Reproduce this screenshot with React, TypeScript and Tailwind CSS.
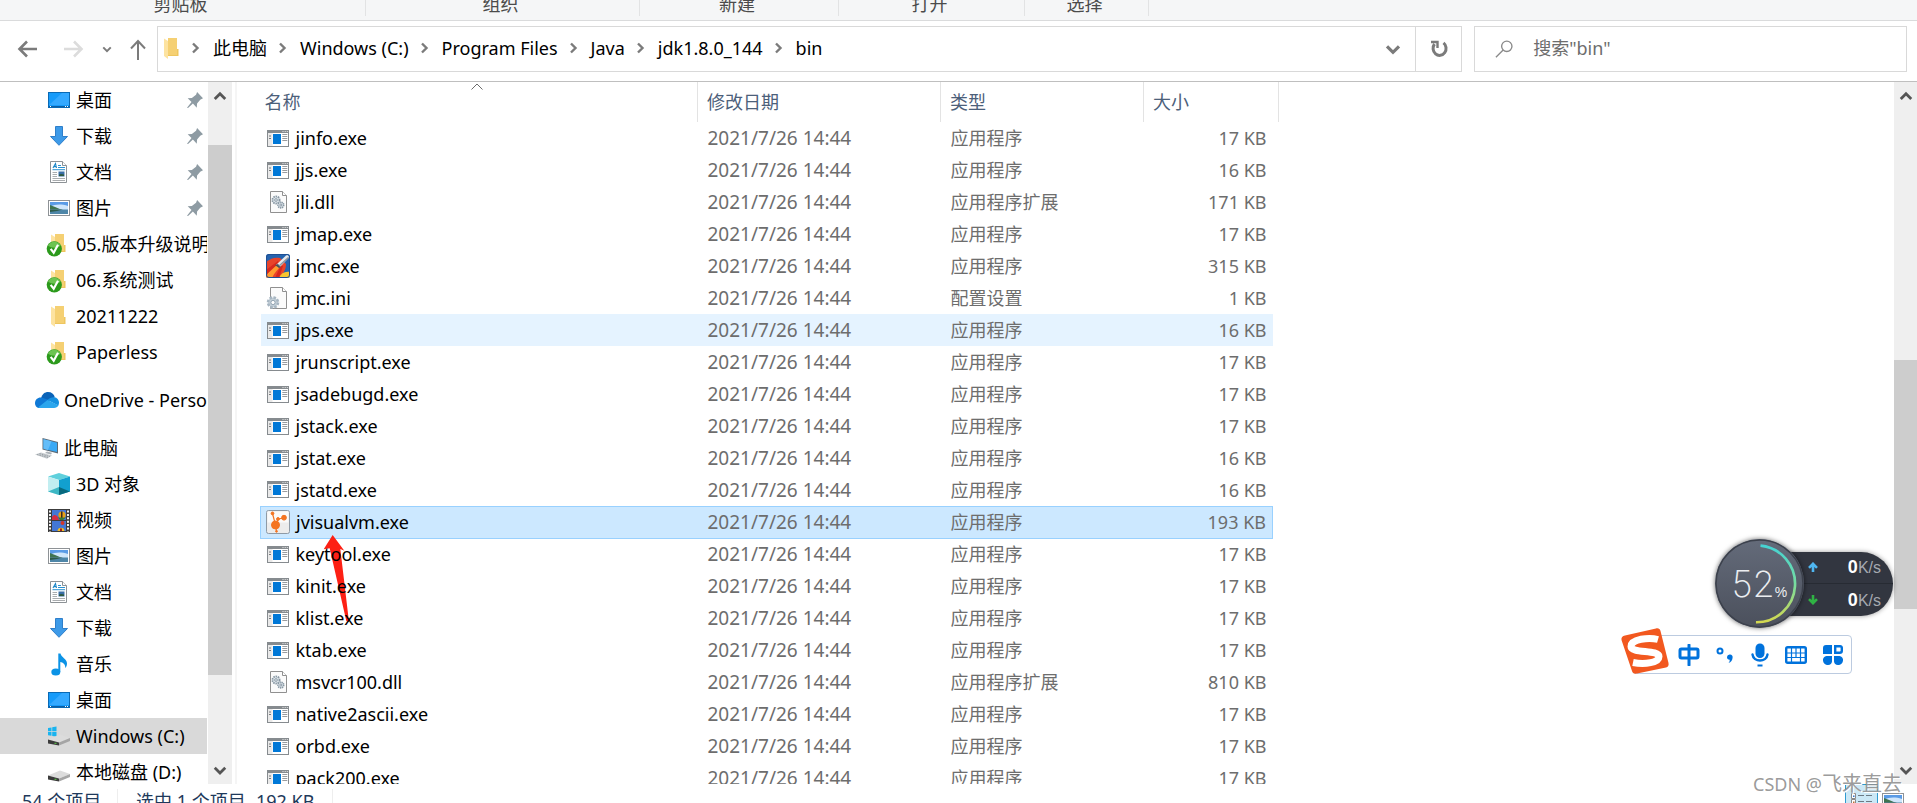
import type { ReactNode } from 'react'

type FileKind = 'exe' | 'dll' | 'ini' | 'jmc' | 'visualvm'

interface FileRow {
  name: string
  kind: FileKind
  type: string
  size: string
}

const MODIFIED = '2021/7/26 14:44'
const APP = '应用程序'
const APP_EXT = '应用程序扩展'

const files: FileRow[] = [
  { name: 'jinfo.exe', kind: 'exe', type: APP, size: '17 KB' },
  { name: 'jjs.exe', kind: 'exe', type: APP, size: '16 KB' },
  { name: 'jli.dll', kind: 'dll', type: APP_EXT, size: '171 KB' },
  { name: 'jmap.exe', kind: 'exe', type: APP, size: '17 KB' },
  { name: 'jmc.exe', kind: 'jmc', type: APP, size: '315 KB' },
  { name: 'jmc.ini', kind: 'ini', type: '配置设置', size: '1 KB' },
  { name: 'jps.exe', kind: 'exe', type: APP, size: '16 KB' },
  { name: 'jrunscript.exe', kind: 'exe', type: APP, size: '17 KB' },
  { name: 'jsadebugd.exe', kind: 'exe', type: APP, size: '17 KB' },
  { name: 'jstack.exe', kind: 'exe', type: APP, size: '17 KB' },
  { name: 'jstat.exe', kind: 'exe', type: APP, size: '16 KB' },
  { name: 'jstatd.exe', kind: 'exe', type: APP, size: '16 KB' },
  { name: 'jvisualvm.exe', kind: 'visualvm', type: APP, size: '193 KB' },
  { name: 'keytool.exe', kind: 'exe', type: APP, size: '17 KB' },
  { name: 'kinit.exe', kind: 'exe', type: APP, size: '17 KB' },
  { name: 'klist.exe', kind: 'exe', type: APP, size: '17 KB' },
  { name: 'ktab.exe', kind: 'exe', type: APP, size: '17 KB' },
  { name: 'msvcr100.dll', kind: 'dll', type: APP_EXT, size: '810 KB' },
  { name: 'native2ascii.exe', kind: 'exe', type: APP, size: '17 KB' },
  { name: 'orbd.exe', kind: 'exe', type: APP, size: '17 KB' },
  { name: 'pack200.exe', kind: 'exe', type: APP, size: '17 KB' },
]

const hoveredFile = 'jps.exe'
const selectedFile = 'jvisualvm.exe'

/* ---------- icons ---------- */

function Chevron({ dir, className }: { dir: 'up' | 'down' | 'right'; className?: string }) {
  const d = {
    up: 'M1.5 8.5 6 4l4.5 4.5',
    down: 'M1.5 4 6 8.5 10.5 4',
    right: 'M4 1.5 8.5 6 4 10.5',
  }[dir]
  return (
    <svg viewBox="0 0 12 12" className={className} fill="none" stroke="currentColor" strokeWidth="2.4" aria-hidden>
      <path d={d} />
    </svg>
  )
}

function ExeIcon() {
  return (
    <svg width="22" height="17" viewBox="0 0 22 17" aria-hidden>
      <rect x="0.5" y="0.5" width="21" height="16" fill="#fff" stroke="#868b8f" />
      <path d="M0 0h22v3H0z" fill="#868b8f" />
      <path d="M15.5 1h1v1h-1zM17.7 1h1v1h-1zM19.8 1h1v1h-1z" fill="#e8e8e8" />
      <path d="M1 3h4.5v13H1z" fill="#e9e9e9" />
      <path d="M2 6h2M2 8.5h2" stroke="#77797b" />
      <path d="M6 4h8v10H6z" fill="#0078d7" />
      <path d="M15.3 4.5h5M15.3 6.5h5M15.3 8.5h5M15.3 10.5h5" stroke="#8c9094" strokeWidth="0.9" />
    </svg>
  )
}

function Sheet({ children }: { children?: ReactNode }) {
  return (
    <>
      <path d="M3.5 0.5h12l4 4v17h-16z" fill="#fbfbfb" stroke="#909090" />
      <path d="M15.5 0.5v4h4" fill="#fff" stroke="#909090" />
      {children}
    </>
  )
}

function DllIcon() {
  return (
    <svg width="22" height="22" viewBox="0 0 22 22" aria-hidden>
      <Sheet>
        <circle cx="9" cy="9" r="3.6" fill="#dde4e9" stroke="#8797a3" strokeWidth="1.8" strokeDasharray="1.5 0.8" />
        <circle cx="9" cy="9" r="1.3" fill="#fff" stroke="#6f8190" strokeWidth="0.8" />
        <circle cx="13.8" cy="14" r="2.9" fill="#dde4e9" stroke="#8797a3" strokeWidth="1.6" strokeDasharray="1.3 0.7" />
        <circle cx="13.8" cy="14" r="1" fill="#fff" stroke="#6f8190" strokeWidth="0.8" />
      </Sheet>
    </svg>
  )
}

function IniIcon() {
  return (
    <svg width="24" height="23" viewBox="-1 0 24 23" aria-hidden>
      <Sheet>
        <circle cx="6" cy="15.5" r="5" fill="#c3cfd8" stroke="#a7b6c2" strokeWidth="2.6" strokeDasharray="2.5 1.4" />
        <circle cx="6" cy="15.5" r="2.1" fill="#fff" stroke="#8195a5" strokeWidth="0.8" />
      </Sheet>
    </svg>
  )
}

function JmcIcon() {
  return (
    <svg width="24" height="24" viewBox="0 0 24 24" aria-hidden>
      <defs>
        <clipPath id="jmc">
          <rect width="24" height="24" rx="2.5" />
        </clipPath>
      </defs>
      <g clipPath="url(#jmc)">
        <path d="M0 0h24v24H0z" fill="#2563ae" />
        <path d="M0 8C5 4 9 3 14 4l6 6c0 6-3 10-7 14H0z" fill="#e8432a" />
        <path d="M0 24C2 17 7 11 13 8l3 3C12 15 8 19 6 24z" fill="#ff9a2e" />
        <path d="M0 16 12 7l1 2L0 21zM9 24l6-13 2 1-4 12z" fill="#d7281d" />
        <path d="M13 24c2-5 6-7 11-6v6z" fill="#f5c52f" />
        <path d="M10 11 20 1.5c2-1.5 4 .5 2.5 2.5L14 13z" fill="#e7e9ec" />
        <path d="m9 11 3-1 3 3-2 1z" fill="#48505c" />
        <path d="m13 12 9.5-8.5" stroke="#8d949e" strokeWidth="1.5" />
      </g>
      <rect x="0.5" y="0.5" width="23" height="23" rx="2.5" fill="none" stroke="#1f4f93" />
    </svg>
  )
}

function VisualVmIcon() {
  return (
    <svg width="24" height="24" viewBox="0 0 24 24" aria-hidden>
      <rect x="0.5" y="0.5" width="23" height="23" rx="2" fill="#ececec" stroke="#8e9aa6" />
      <path d="M1.5 1.5h21v11h-21z" fill="#fafafa" />
      <g fill="#f47421" stroke="#f47421">
        <path d="M6.5 3.5 9.5 15l2.5-6 6-1M9.5 15l1 6" fill="none" strokeWidth="1.2" />
        <circle cx="6.5" cy="3.4" r="1.4" />
        <circle cx="9.5" cy="15" r="4" />
        <circle cx="12" cy="9" r="1.4" />
        <circle cx="18" cy="7.7" r="2.4" />
        <circle cx="10.5" cy="21.3" r="0.9" />
      </g>
    </svg>
  )
}

function FileIcon({ kind }: { kind: FileKind }) {
  switch (kind) {
    case 'dll':
      return <DllIcon />
    case 'ini':
      return <IniIcon />
    case 'jmc':
      return <JmcIcon />
    case 'visualvm':
      return <VisualVmIcon />
    default:
      return <ExeIcon />
  }
}

function FolderShape() {
  return (
    <>
      <path d="M4 0h9v11h1.500v7H4z" fill="#eec65f" />
      <path d="M4 0h9v17H4z" fill="#f5d073" />
      <path d="M0 0.500 4 3v18L0 18z" fill="#fde3a0" />
    </>
  )
}

function FolderIcon({ synced = false }: { synced?: boolean }) {
  return (
    <svg width="22" height="24" viewBox="-3 -2 22 24" className="overflow-visible" aria-hidden>
      <FolderShape />
      {synced && (
        <>
          <circle cx="3.3" cy="14.8" r="7.6" fill="#2c9a1c" />
          <path d="M-3 11.8a7 7 0 0 1 12.6 0c-3 2.500-9 2.500-12.6 0z" fill="#6cc452" />
          <path d="m-.3 14.800 3 4L7 10.800" fill="none" stroke="#fff" strokeWidth="2.2" />
        </>
      )}
    </svg>
  )
}

function DesktopIcon() {
  return (
    <svg width="22" height="16" viewBox="0 0 22 16" aria-hidden>
      <rect x="0.5" y="0.5" width="21" height="15" fill="#169bfa" stroke="#0a6ab5" />
      <path d="M1 13 14 1h7v12z" fill="#35a9ff" />
      <path d="M1 14h20v1H1z" fill="#0c5ea5" />
      <path d="M2 14h1v1H2zM17 14h1v1h-1zM19 14h1v1h-1z" fill="#fff" />
    </svg>
  )
}

function DownloadIcon() {
  return (
    <svg width="22" height="20" viewBox="0 0 22 20" aria-hidden>
      <path d="M7.5 0.5h7v10h5L11 19.3 2.5 10.5h5z" fill="#3d9ae8" stroke="#2f7fca" />
    </svg>
  )
}

function DocumentIcon() {
  return (
    <svg width="22" height="22" viewBox="0 0 22 22" aria-hidden>
      <path d="M2.5 0.5h12l4 4v17h-16z" fill="#fff" stroke="#8d9296" />
      <path d="M14.5 0.5v4h4" fill="#fff" stroke="#8d9296" />
      <path d="m5 7 2.5-4.5L8.5 7M6 5.6h2.5" fill="none" stroke="#1a86c8" strokeWidth="1.1" />
      <path d="M10 4.5h3M10 6.5h7M4.5 8.7h12.5" stroke="#2a92d2" />
      <path d="M4.5 11.5H9M4.5 13.5H9M4.5 15.5H9M4.5 17.5h12.5M4.5 19.5h12.5" stroke="#a0a4a7" strokeWidth="0.9" />
      <path d="M10.5 10.5h6v5h-6z" fill="#3a6fa8" />
      <path d="M11 13.5c2-1 3-.5 5 0V15h-5z" fill="#2f5a3f" />
    </svg>
  )
}

function PictureIcon() {
  return (
    <svg width="22" height="16" viewBox="0 0 22 16" aria-hidden>
      <rect x="0.5" y="0.5" width="21" height="15" fill="#fff" stroke="#8e9296" />
      <path d="M2 2h18v12H2z" fill="#5a9be6" />
      <path d="M2 7c5-3 11-3 18-1v4H2z" fill="#cfe6fb" />
      <path d="M2 5c3 1 7 3 11 4.6H2z" fill="#3f7450" />
      <path d="M2 9.5h18V14H2z" fill="#4e86a8" />
      <path d="M2 9.5h13l-6 1.5-7 1z" fill="#2d5b4a" />
    </svg>
  )
}

function OneDriveIcon() {
  return (
    <svg width="24" height="16" viewBox="0 0 24 16" aria-hidden>
      <path d="M6 6.5C7 2 10 0 13 0c3.5 0 6 2 6.8 5.3L12 10z" fill="#0a63b8" />
      <path d="M0 11c0-3.5 3-6 6.5-5.5L14 8 9 16H4.5C2 16 0 14 0 11z" fill="#0f79d6" />
      <path d="M19.5 5.2C22 5.5 24 8 24 10.8c0 1-.3 2-.8 2.7L12.5 8c2-2 4-3 7-2.8z" fill="#1590e0" />
      <path d="M3 15.6 12.5 8l11 5.2C22.5 15 21 16 19 16H5c-.7 0-1.400-.1-2-.4z" fill="#2ba6ed" />
    </svg>
  )
}

function ComputerIcon() {
  return (
    <svg width="24" height="21" viewBox="0 0 24 21" aria-hidden>
      <path d="m7.500 0 15.500 4v11.500L7.500 11.500z" fill="#5d6a76" />
      <path d="m8.500 1.300 13.500 3.500v9.200L8.500 10.700z" fill="#3aa9f5" />
      <path d="m8.500 1.300 8 2L13 12l-4.500-1.300z" fill="#63bdf9" />
      <path d="m12 13.500 5 1.300-1 1.700-6-1.500z" fill="#aab1b7" />
      <path d="m0 16.500 6-2 11 3-5 3.200z" fill="#c6cbcf" />
      <path d="m2 16.500 11 3M4.500 15.600l10.500 3" stroke="#858c92" strokeWidth="0.7" strokeDasharray="1.5 1" />
    </svg>
  )
}

function CubeIcon() {
  return (
    <svg width="22" height="22" viewBox="0 0 22 22" aria-hidden>
      <path d="m11 0 11 3.500L11 7 0 3.500z" fill="#5fd0dc" />
      <path d="M0 3.500 11 7v15L0 18.500z" fill="#c2eef1" />
      <path d="M22 3.500 11 7v15l11-3.500z" fill="#12a0cf" />
      <path d="m0 18.500 11-4.500v8z" fill="#3db7c4" />
      <path d="m22 18.500-11-4.500v8z" fill="#08697e" />
    </svg>
  )
}

function VideoIcon() {
  return (
    <svg width="22" height="23" viewBox="0 0 22 23" aria-hidden>
      <path d="M0 0h22v23H0z" fill="#3c3c3c" />
      <path d="M2 1.500v21M20 1.500v21" stroke="#f2f2f2" strokeWidth="2" strokeDasharray="2 1.400" />
      <path d="M4 1h14v10H4zM4 12h14v10H4z" fill="#4377d6" />
      <path d="M4 11V8c2-3 4-2 6 0l1 3z" fill="#d22f45" />
      <circle cx="14" cy="6" r="3.600" fill="#e6a117" />
      <path d="M13 2.500h1.500v7H13z" fill="#3b2a20" />
      <path d="M10 8.500h8l-3 2.500h-3z" fill="#3a7b35" />
      <circle cx="14.500" cy="14" r="2" fill="#d4362a" />
      <path d="M9.500 22c0-4.500 7-4.500 7 0z" fill="#f1bb25" />
      <path d="M12 19.500h2V22h-2z" fill="#a3211d" />
    </svg>
  )
}

function MusicIcon() {
  return (
    <svg width="22" height="23" viewBox="0 0 22 23" aria-hidden>
      <ellipse cx="7.800" cy="19" rx="4.500" ry="3.600" fill="#0c93e6" />
      <path d="M10.300 0.500h2.200c.5 4 6.500 5 6.500 10 0 2-.8 3.500-1.800 4.500.5-4-2.500-5.500-4.900-6V19h-2z" fill="#0c93e6" />
    </svg>
  )
}

function DriveIcon({ system = false }: { system?: boolean }) {
  return (
    <svg width="22" height="20" viewBox="0 0 22 20" aria-hidden>
      {system && (
        <path
          d="M0 2l3.500-.6v3.800H0zM4.200 1.200 8.500.5v4.700H4.200zM0 6h3.500v3.800L0 9.200zM4.200 6h4.300v4.500l-4.300-.6z"
          fill="#19b4f0"
        />
      )}
      <path d="M0 13.500 12 8.500l10 3.500-11 4.500z" fill="#dcdcdc" />
      <path d="M0 13.500 11 16.500v3L0 17.500z" fill="#3b3b3b" />
      <path d="m11 16.500 11-4.500v3l-11 4.500z" fill="#a5a5a5" />
      <path d="M6.500 16.800h2v1h-2z" fill="#5ed14a" />
    </svg>
  )
}

function PinIcon() {
  return (
    <svg width="16" height="16" viewBox="0 0 46 46" fill="#8e9ba3" aria-hidden>
      <path d="M29 0 46 18 38 22 29 33 28 45 17 33 3 46 0 45 13 29 2 18 14 17 26 8z" />
    </svg>
  )
}

/* ---------- navigation pane ---------- */

interface NavEntry {
  label: string
  icon: ReactNode
  pinned?: boolean
  active?: boolean
}

const quickAccess: NavEntry[] = [
  { label: '桌面', icon: <DesktopIcon />, pinned: true },
  { label: '下载', icon: <DownloadIcon />, pinned: true },
  { label: '文档', icon: <DocumentIcon />, pinned: true },
  { label: '图片', icon: <PictureIcon />, pinned: true },
  { label: '05.版本升级说明', icon: <FolderIcon synced /> },
  { label: '06.系统测试', icon: <FolderIcon synced /> },
  { label: '20211222', icon: <FolderIcon /> },
  { label: 'Paperless', icon: <FolderIcon synced /> },
]

const thisPc: NavEntry[] = [
  { label: '3D 对象', icon: <CubeIcon /> },
  { label: '视频', icon: <VideoIcon /> },
  { label: '图片', icon: <PictureIcon /> },
  { label: '文档', icon: <DocumentIcon /> },
  { label: '下载', icon: <DownloadIcon /> },
  { label: '音乐', icon: <MusicIcon /> },
  { label: '桌面', icon: <DesktopIcon /> },
  { label: 'Windows (C:)', icon: <DriveIcon system />, active: true },
  { label: '本地磁盘 (D:)', icon: <DriveIcon /> },
]

function NavItem({ entry }: { entry: NavEntry }) {
  return (
    <li>
      <a href="#" className={`flex h-9 items-center pl-12 ${entry.active ? 'bg-[#d9d9d9]' : ''}`}>
        <span className="flex w-7 shrink-0">{entry.icon}</span>
        <span className="flex-1 overflow-hidden whitespace-nowrap">{entry.label}</span>
        {entry.pinned && (
          <span className="mr-1 shrink-0">
            <PinIcon />
          </span>
        )}
      </a>
    </li>
  )
}

function NavRoot({ label, icon }: { label: string; icon: ReactNode }) {
  return (
    <a href="#" className="mt-3 flex h-9 items-center pl-[35px]">
      <span className="flex w-[29px] shrink-0">{icon}</span>
      <span className="overflow-hidden whitespace-nowrap">{label}</span>
    </a>
  )
}

function Scrollbar({ children }: { children: ReactNode }) {
  return (
    <div className="flex w-full flex-col bg-[#efefef] text-[#555]">
      <button type="button" aria-label="向上滚动" className="flex h-7 shrink-0 items-center justify-center">
        <Chevron dir="up" className="size-3.5" />
      </button>
      <div className="flex min-h-0 flex-1 flex-col">{children}</div>
      <button type="button" aria-label="向下滚动" className="flex h-7 shrink-0 items-center justify-center">
        <Chevron dir="down" className="size-3.5" />
      </button>
    </div>
  )
}

function NavigationPane() {
  return (
    <div className="flex shrink-0 border-r-2 border-[#f5f5f5] pr-[3px]">
      <nav className="w-[207px] overflow-hidden text-black">
        <ul>
          {quickAccess.map((entry) => (
            <NavItem key={entry.label} entry={entry} />
          ))}
        </ul>
        <NavRoot label="OneDrive - Personal" icon={<OneDriveIcon />} />
        <NavRoot label="此电脑" icon={<ComputerIcon />} />
        <ul>
          {thisPc.map((entry) => (
            <NavItem key={entry.label} entry={entry} />
          ))}
        </ul>
      </nav>
      <div className="ml-px flex w-6">
        <Scrollbar>
          <div className="mt-[35px] h-[82%] bg-[#cdcdcd]" />
        </Scrollbar>
      </div>
    </div>
  )
}

/* ---------- top bars ---------- */

const ribbonGroups = [
  { label: '剪贴板', width: 'w-[366px]' },
  { label: '组织', width: 'w-[274px]' },
  { label: '新建', width: 'w-[199px]' },
  { label: '打开', width: 'w-[186px]' },
  { label: '选择', width: 'w-[124px]' },
]

function Ribbon() {
  return (
    <div className="flex h-[21px] shrink-0 items-end overflow-hidden border-b border-[#dadbdc] bg-[#f5f6f7] text-[#4b4b4b]">
      {ribbonGroups.map((g) => (
        <div key={g.label} className={`${g.width} mb-1 shrink-0 border-r border-[#e2e3e4] pr-1 text-center leading-6`}>
          {g.label}
        </div>
      ))}
    </div>
  )
}

const crumbs = ['此电脑', 'Windows (C:)', 'Program Files', 'Java', 'jdk1.8.0_144', 'bin']

function AddressBar() {
  return (
    <div className="flex h-[61px] shrink-0 border-b border-[#bfbfbf] pt-[5px] pr-2.5 text-[#7b7b7b]">
      <div className="flex h-[46px] w-[157px] shrink-0 items-center">
        <button type="button" aria-label="后退" className="ml-4 w-[46px]">
          <svg width="24" height="20" viewBox="0 0 24 20" fill="none" stroke="currentColor" strokeWidth="2.600" aria-hidden>
            <path d="M21 10H4M11 2.500 3.500 10l7.500 7.500" />
          </svg>
        </button>
        <button type="button" aria-label="前进" className="w-[38px] text-[#dcdcdc]">
          <svg width="24" height="20" viewBox="0 0 24 20" fill="none" stroke="currentColor" strokeWidth="2.600" aria-hidden>
            <path d="M2 10h17M12 2.500 19.500 10 12 17.500" />
          </svg>
        </button>
        <button type="button" aria-label="最近浏览的位置" className="flex w-[28px]">
          <Chevron dir="down" className="ml-0.5 size-2.5" />
        </button>
        <button type="button" aria-label="上移">
          <svg width="20" height="22" viewBox="0 0 20 22" fill="none" stroke="currentColor" strokeWidth="2" aria-hidden>
            <path d="M10 22V3M3 10.500 10 3l7 7.500" />
          </svg>
        </button>
      </div>

      <div className="flex h-[46px] flex-1 items-center border border-[#d9d9d9]">
        <svg width="15" height="22" viewBox="0 0 15 22" className="ml-1.5 shrink-0" aria-hidden>
          <FolderShape />
        </svg>
        <ol className="ml-px flex flex-1 pb-0.5 text-black">
          {crumbs.map((c) => (
            <li key={c} className="flex items-center">
              <Chevron dir="right" className="mr-3 ml-[9px] size-3 text-[#7b7b7b]" />
              <button type="button" className="whitespace-nowrap">
                {c}
              </button>
            </li>
          ))}
        </ol>
        <button type="button" aria-label="上一个位置" className="flex w-11 justify-center">
          <Chevron dir="down" className="size-4" />
        </button>
        <button
          type="button"
          aria-label="刷新"
          className="flex h-full w-[46px] items-center justify-center border-l border-[#d9d9d9]"
        >
          <svg width="20" height="20" viewBox="0 0 20 20" fill="none" stroke="currentColor" strokeWidth="3" aria-hidden>
            <path d="M14.500 3.800A6.500 7 0 1 1 5.500 5" />
            <path d="M2 3h6.500v6" strokeWidth="2.400" />
          </svg>
        </button>
      </div>

      <label className="ml-3 flex h-[46px] w-[433px] shrink-0 items-center border border-[#d9d9d9] pl-5">
        <svg width="20" height="20" viewBox="0 0 20 20" fill="none" stroke="#8a8a8a" strokeWidth="1.500" aria-hidden>
          <circle cx="13" cy="7" r="5.700" />
          <path d="m9 11-8 8" />
        </svg>
        <input
          type="text"
          aria-label="搜索"
          placeholder={'搜索"bin"'}
          className="ml-5 w-full bg-transparent pb-0.5 outline-none placeholder:text-[#6d6d6d]"
        />
      </label>
    </div>
  )
}

/* ---------- file list ---------- */

function FileTable() {
  return (
    <div className="min-w-0 flex-1 overflow-hidden pl-[23px]">
      <table className="w-[1018px] table-fixed border-collapse text-left text-[#6d6d6d]">
        <colgroup>
          <col className="w-[437px]" />
          <col className="w-[243px]" />
          <col className="w-[203px]" />
          <col className="w-[129px]" />
          <col className="w-[6px]" />
        </colgroup>
        <thead className="text-[#4c607a]">
          <tr className="h-10">
            <th className="relative border-r border-[#e3e3e3] pl-1 font-normal">
              名称
              <svg width="12" height="7" viewBox="0 0 12 7" className="absolute top-px left-[210px]" aria-hidden>
                <path d="m.5 6.500 5.500-5.500 5.500 5.500" fill="none" stroke="#6b6b6b" />
              </svg>
            </th>
            <th className="border-r border-[#e3e3e3] pl-[9px] font-normal">修改日期</th>
            <th className="border-r border-[#e3e3e3] pl-[9px] font-normal">类型</th>
            <th colSpan={2} className="border-r border-[#e3e3e3] pl-[9px] font-normal">
              大小
            </th>
          </tr>
        </thead>
        <tbody>
          {files.map((f) => {
            const selected = f.name === selectedFile
            const bg = selected
              ? 'bg-[#cce8ff] border-y border-[#99d1ff]'
              : f.name === hoveredFile
                ? 'bg-[#e5f3ff]'
                : ''
            return (
              <tr key={f.name} className="h-8">
                <td className={`relative p-0 ${bg} ${selected ? 'border-l' : ''}`}>
                  <div className="flex items-center pl-[5px] leading-6 text-black">
                    <span className="flex w-[30px] shrink-0 justify-center pr-1.5">
                      <FileIcon kind={f.kind} />
                    </span>
                    {f.name}
                  </div>
                  {selected && (
                    <svg width="27" height="88" viewBox="0 0 81 264" className="absolute top-7 left-[62px]" aria-hidden>
                      <path d="m29 0 35 47-12-5 26 219-8-3L20 40 2 43z" fill="#fd2014" />
                    </svg>
                  )}
                </td>
                <td className={`py-0 pr-0 pl-2.5 text-[19px] leading-6 ${bg}`}>{MODIFIED}</td>
                <td className={`py-0 pr-0 pl-2.5 leading-6 ${bg}`}>{f.type}</td>
                <td className={`py-0 pr-1.5 pl-0 text-right leading-6 ${bg} ${selected ? 'border-r' : ''}`}>{f.size}</td>
                <td className="p-0" />
              </tr>
            )
          })}
        </tbody>
      </table>
    </div>
  )
}

/* ---------- status bar ---------- */

function StatusBar() {
  return (
    <div className="flex h-[19px] shrink-0 items-start overflow-hidden text-[#1e395b]">
      <div className="flex h-[34px] items-center">
        <span className="ml-[22px] w-24 border-r border-[#eee]">54 个项目</span>
        <span className="ml-[18px] w-[120px]">选中 1 个项目</span>
        <span className="w-[77px] border-r border-[#eee]">192 KB</span>
      </div>
      <div className="mr-[9px] ml-auto flex">
        <button
          type="button"
          aria-label="详细信息"
          className="flex h-9 w-[33px] justify-center border border-[#2f9bd0] bg-[#cbe8f6] pt-2"
        >
          <svg width="22" height="18" viewBox="0 0 22 18" fill="none" aria-hidden>
            <path d="M.5.500h4v5h-4zM.5 6.500h4v5h-4zM.5 12.500h4v5h-4z" fill="#fff" stroke="#8a8a8a" />
            <path d="M2 2.500h1.500v1.500H2z" fill="#3175c6" />
            <path d="M2 8.500h1.500V10H2z" fill="#c07030" />
            <path d="M7 2.500h6M15 2.500h6M7 8.500h6M15 8.500h6M7 14.500h6M15 14.500h6" stroke="#6d7a84" />
          </svg>
        </button>
        <button type="button" aria-label="大图标" className="flex w-[30px] justify-center pt-[9px]">
          <PictureIcon />
        </button>
      </div>
    </div>
  )
}

/* ---------- floating desktop tools ---------- */

function SpeedRow({ up, value }: { up: boolean; value: string }) {
  return (
    <div className="flex h-8 items-center pl-[93px]">
      <svg width="10" height="10" viewBox="0 0 10 10" fill="none" stroke={up ? '#4fb6f0' : '#2fb344'} strokeWidth="2.600" aria-hidden>
        <path d={up ? 'M5 10V1.500M1 5.800l4-4 4 4' : 'M5 0v8.500M1 4.200l4 4 4-4'} />
      </svg>
      <span className="ml-auto pr-3 text-base leading-none text-[#a5a9b0]">
        <b className="text-lg leading-none text-white">{value}</b>K/s
      </span>
    </div>
  )
}

function SpeedMeter() {
  return (
    <div className="absolute right-6 bottom-[175px] flex h-[89px] w-[178px] items-center font-['Liberation_Sans',sans-serif]">
      <div className="w-full divide-y divide-[#272b33] rounded-r-full bg-[#323640] shadow-[0_0_5px_rgba(0,0,0,0.4)] [clip-path:inset(-8px_-8px_-8px_50px)]">
        <SpeedRow up value="0" />
        <SpeedRow up={false} value="0" />
      </div>
      <div className="absolute top-0 left-0 flex size-[89px] items-center justify-center rounded-full bg-linear-to-b from-[#646b7a] to-[#4b505c] text-[#eceef1] shadow-[0_0_5px_rgba(0,0,0,0.6)]">
        <svg viewBox="0 0 88 88" className="absolute inset-0" fill="none" aria-hidden>
          <defs>
            <linearGradient id="ring" x1="0" y1="0" x2="0" y2="1">
              <stop offset="0" stopColor="#45d3d3" />
              <stop offset="0.500" stopColor="#77dca0" />
              <stop offset="1" stopColor="#d3d84f" />
            </linearGradient>
          </defs>
          <circle cx="44" cy="44" r="43" stroke="#3c414c" strokeWidth="1.500" />
          <path d="M45 6.500a38 38 0 0 1-4.500 75.800" stroke="url(#ring)" strokeWidth="2.600" />
        </svg>
        <span className="relative font-['Inter',sans-serif] text-4xl leading-none font-extralight">52</span>
        <span className="relative mt-4 text-sm leading-none">%</span>
      </div>
    </div>
  )
}

function InputMethodBar() {
  return (
    <div className="absolute right-[65px] bottom-[129px] flex h-[39px] w-[220px] items-center justify-between rounded-sm border border-[#bccbe0] bg-white pr-2 pl-[45px] text-[#0072dc]">
      <svg width="48" height="46" viewBox="0 0 48 46" className="absolute -top-2 -left-3" aria-hidden>
        <path
          d="M4 7.500 35 .5c2.500-.5 4 .5 4.500 2.500L47.500 35c.5 2.500-.5 4-2.500 4.500L16 45.500c-3 .5-4.500-.5-5-2.500L.5 12c-.5-2.500 1-4 3.500-4.500z"
          fill="#f2581f"
        />
        <path
          d="M37 11.500C28 9 10 11 10 18.500c0 7 28 3 28 10 0 6-14 8.500-26 6"
          fill="none"
          stroke="#fff"
          strokeWidth="7"
        />
      </svg>
      <button type="button" aria-label="中文">
        <svg width="22" height="22" viewBox="0 0 22 22" fill="none" stroke="currentColor" strokeWidth="3" aria-hidden>
          <rect x="2" y="5" width="18" height="9" rx="1.500" />
          <path d="M11 1v20" strokeLinecap="round" />
        </svg>
      </button>
      <button type="button" aria-label="标点">
        <svg width="18" height="18" viewBox="0 0 18 18" fill="none" aria-hidden>
          <circle cx="4" cy="5" r="2.500" stroke="currentColor" strokeWidth="2" />
          <path
            d="M11 11a2.800 2.800 0 1 1 5.600.5c0 2.500-1.600 5-4.100 5.500 1-1 1.300-2 1.200-3.200A2.800 2.800 0 0 1 11 11z"
            fill="currentColor"
          />
        </svg>
      </button>
      <button type="button" aria-label="语音">
        <svg width="18" height="24" viewBox="0 0 18 24" fill="currentColor" aria-hidden>
          <rect x="4.500" y="0.500" width="9" height="14.500" rx="4.500" />
          <path d="M1.500 11.500c1 8 14 8 15 0" fill="none" stroke="currentColor" strokeWidth="2.400" strokeLinecap="round" />
          <path d="M6.500 21.500h5v2h-5z" />
        </svg>
      </button>
      <button type="button" aria-label="键盘">
        <svg width="22" height="18" viewBox="0 0 22 18" fill="none" stroke="currentColor" aria-hidden>
          <rect x="1.200" y="1.200" width="19.600" height="15.600" rx="1.500" strokeWidth="2.400" />
          <path d="M2 7h18M2 11.500h18M6.500 2v14M11 2v9.500M15.500 2v14" strokeWidth="1.200" />
        </svg>
      </button>
      <button type="button" aria-label="工具箱">
        <svg width="20" height="20" viewBox="0 0 20 20" fill="currentColor" aria-hidden>
          <path d="M3 0h6v9H0V3a3 3 0 0 1 3-3zM3.500 11H9v5.500A4 4 0 0 1 5 20 4.500 4.500 0 0 1 0 15.500 4 4 0 0 1 3.500 11zM11 11h5.500a4 4 0 0 1 3.500 4.500 4.500 4.500 0 0 1-5 4.500 4 4 0 0 1-4-3.500z" />
          <path
            d="M12.200 1.200h5a1.600 1.600 0 0 1 1.600 1.600v3a2 2 0 0 1-2 2h-4.600z"
            fill="none"
            stroke="currentColor"
            strokeWidth="2.400"
          />
        </svg>
      </button>
    </div>
  )
}

export default function App() {
  return (
    <div className="relative flex h-screen flex-col overflow-hidden bg-white font-['Noto_Sans','Noto_Sans_CJK_SC',sans-serif] text-lg leading-6">
      <Ribbon />
      <AddressBar />
      <main className="flex min-h-0 flex-1 overflow-hidden">
        <NavigationPane />
        <FileTable />
        <div className="flex w-[23px] shrink-0">
          <Scrollbar>
            <div className="mt-[250px] h-[249px] bg-[#cdcdcd]" />
          </Scrollbar>
        </div>
      </main>
      <StatusBar />
      <SpeedMeter />
      <InputMethodBar />
      <p className="pointer-events-none absolute right-[15px] bottom-[7px] flex items-center whitespace-pre text-[#8e8e8e]/90 [text-shadow:1px_1px_0_#fff]">
        CSDN @<span className="text-xl leading-6">飞来直去</span>
      </p>
    </div>
  )
}
